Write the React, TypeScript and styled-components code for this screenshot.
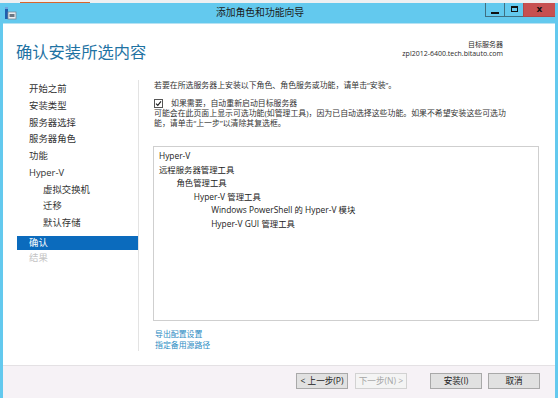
import styled, { createGlobalStyle } from "styled-components";

const GlobalStyle = createGlobalStyle`
  html, body {
    margin: 0;
    padding: 0;
    background: #ffffff;
  }
  body {
    width: 558px;
    height: 398px;
    overflow: hidden;
    font-family: "Open Sans", "Noto Sans CJK SC", sans-serif;
    color: #262626;
  }
`;

const Screen = styled.div`
  width: 558px;
  height: 398px;
  display: flex;
  flex-direction: column;
`;

const TopStrip = styled.div`
  height: 3px;
  background: #eef0f2;
  display: flex;
  align-items: flex-end;
`;

const OrangeMark = styled.div`
  margin-left: 20px;
  width: 70px;
  height: 1px;
  background: #d9652b;
`;

const Window = styled.div`
  flex: 1;
  display: flex;
  flex-direction: column;
  border-left: 3px solid #63c9ee;
  border-right: 3px solid #63c9ee;
  min-height: 0;
`;

const TitleBar = styled.div`
  height: 20px;
  background: #63c9ee;
  border-bottom: 1px solid #b6e2f3;
  display: flex;
  align-items: flex-start;
`;

const AppIcon = styled.svg`
  width: 13px;
  height: 14px;
  margin: 3px 0 0 1px;
  flex-shrink: 0;
`;

const Title = styled.div`
  flex: 1;
  text-align: center;
  font-size: 9.8px;
  line-height: 20px;
  color: #1b1b1b;
  padding-left: 18px;
`;

const Controls = styled.div`
  display: flex;
  height: 14px;
`;

const CtrlButton = styled.div<{ $close?: boolean }>`
  width: ${(p) => (p.$close ? "31px" : "18px")};
  height: 13px;
  display: flex;
  align-items: center;
  justify-content: center;
  background: ${(p) => (p.$close ? "#c75050" : "transparent")};
  border: 1px solid ${(p) => (p.$close ? "#b04848" : "#3f6f82")};
  border-top: none;
  border-right: ${(p) => (p.$close ? "none" : "0")};
`;

const MinGlyph = styled.div`
  width: 8px;
  height: 2px;
  background: #111;
  margin-top: 6px;
`;

const MaxGlyph = styled.div`
  width: 5px;
  height: 3px;
  border: 1px solid #111;
  border-top-width: 2px;
  margin-top: -1px;
`;

const CloseGlyph = styled.div`
  font-family: "DejaVu Sans", sans-serif;
  font-weight: 700;
  font-size: 9px;
  line-height: 9px;
  color: #111;
  margin-top: -1px;
`;

const Body = styled.div`
  flex: 1;
  display: flex;
  flex-direction: column;
  background: #ffffff;
  min-height: 0;
`;

const Header = styled.div`
  height: 56px;
  display: flex;
  justify-content: space-between;
  align-items: flex-start;
  padding: 0 52px 0 13px;
  box-sizing: border-box;
`;

const Heading = styled.h1`
  margin: 16px 0 0;
  font-size: 16.3px;
  font-weight: 400;
  line-height: 22px;
  color: #1f73a3;
  font-family: "Noto Sans CJK SC", sans-serif;
`;

const Target = styled.div`
  margin-top: 16px;
  text-align: right;
  font-size: 7px;
  line-height: 9px;
  color: #2a2a2a;
`;

const Main = styled.div`
  flex: 1;
  display: flex;
  padding: 0 16px 14px 14px;
  min-height: 0;
`;

const Sidebar = styled.nav`
  width: 121px;
  border-right: 1px solid #e3e3e3;
  display: flex;
  flex-direction: column;
  padding-top: 1px;
  flex-shrink: 0;
`;

const NavItem = styled.div<{ $sub?: boolean; $active?: boolean; $disabled?: boolean }>`
  height: ${(p) => (p.$active ? "14px" : "16.75px")};
  line-height: ${(p) => (p.$active ? "14px" : "16.75px")};
  margin-top: ${(p) => (p.$active ? "4px" : "0")};
  padding-left: ${(p) => (p.$sub ? "26px" : "12px")};
  font-size: 9.4px;
  background: ${(p) => (p.$active ? "#0b6bbd" : "transparent")};
  color: ${(p) => (p.$active ? "#ffffff" : p.$disabled ? "#c4c4c4" : "#333333")};
  white-space: nowrap;
`;

const Content = styled.section`
  flex: 1;
  display: flex;
  flex-direction: column;
  padding-left: 14px;
  min-width: 0;
`;

const Text = styled.p`
  margin: 0 0 0 1px;
  font-size: 7.9px;
  line-height: 10px;
  color: #333;
`;

const CheckRow = styled.label`
  display: flex;
  align-items: center;
  gap: 8px;
  margin: 8px 0 0 1px;
  font-size: 7.9px;
  line-height: 10px;
  color: #333;
`;

const CheckBox = styled.span`
  width: 7px;
  height: 7px;
  border: 1px solid #555;
  background: #fff;
  display: flex;
  align-items: center;
  justify-content: center;
`;

const Note = styled(Text)`
  margin-top: 1px;
  line-height: 9.5px;
  padding-right: 32px;
`;

const ListBox = styled.div`
  flex: 1;
  margin-top: 18px;
  border: 1px solid #cfcfcf;
  padding: 2px 5px;
`;

const ListRow = styled.div<{ $level: number }>`
  padding-left: ${(p) => p.$level * 17.4}px;
  font-size: 8.4px;
  line-height: 13.6px;
  color: #222;
  white-space: nowrap;
`;

const Links = styled.div`
  display: flex;
  flex-direction: column;
  margin: 8px 0 0 2px;
`;

const LinkText = styled.a`
  font-size: 7.9px;
  line-height: 11px;
  color: #2b8cc3;
  text-decoration: none;
`;

const Footer = styled.div`
  height: 33px;
  box-sizing: border-box;
  background: #f6f2f6;
  border-top: 1px solid #e4e1e4;
  display: flex;
  justify-content: flex-end;
  align-items: flex-start;
  padding: 7px 15px 0 0;
`;

const Button = styled.button<{ $gap?: number; $disabled?: boolean }>`
  width: 52px;
  height: 16px;
  margin-left: ${(p) => p.$gap ?? 6}px;
  padding: 0;
  font-family: "Open Sans", "Noto Sans CJK SC", sans-serif;
  font-size: 8.6px;
  line-height: 14px;
  background: ${(p) => (p.$disabled ? "#f4f4f4" : "#e1e1e1")};
  border: 1px solid ${(p) => (p.$disabled ? "#d2d2d2" : "#a9a9a9")};
  color: ${(p) => (p.$disabled ? "#a6a6a6" : "#222")};
`;

const nav = [
  { label: "开始之前" },
  { label: "安装类型" },
  { label: "服务器选择" },
  { label: "服务器角色" },
  { label: "功能" },
  { label: "Hyper-V" },
  { label: "虚拟交换机", sub: true },
  { label: "迁移", sub: true },
  { label: "默认存储", sub: true },
  { label: "确认", active: true },
  { label: "结果", disabled: true },
];

const features = [
  { label: "Hyper-V", level: 0 },
  { label: "远程服务器管理工具", level: 0 },
  { label: "角色管理工具", level: 1 },
  { label: "Hyper-V 管理工具", level: 2 },
  { label: "Windows PowerShell 的 Hyper-V 模块", level: 3 },
  { label: "Hyper-V GUI 管理工具", level: 3 },
];

export default function App() {
  return (
    <Screen>
      <GlobalStyle />
      <TopStrip>
        <OrangeMark />
      </TopStrip>
      <Window>
        <TitleBar>
          <AppIcon viewBox="0 0 13 14">
            <rect x="1" y="1" width="3" height="12" fill="#1f5fae" />
            <rect x="1" y="1" width="3" height="2" fill="#6fa3dc" />
            <rect x="4" y="6" width="8" height="7" fill="#e9eef3" stroke="#7b8794" strokeWidth="0.8" />
            <rect x="5.5" y="8" width="5" height="3" fill="#6b7682" />
          </AppIcon>
          <Title>添加角色和功能向导</Title>
          <Controls>
            <CtrlButton>
              <MinGlyph />
            </CtrlButton>
            <CtrlButton>
              <MaxGlyph />
            </CtrlButton>
            <CtrlButton $close>
              <CloseGlyph>x</CloseGlyph>
            </CtrlButton>
          </Controls>
        </TitleBar>
        <Body>
          <Header>
            <Heading>确认安装所选内容</Heading>
            <Target>
              <div>目标服务器</div>
              <div>zpl2012-6400.tech.bitauto.com</div>
            </Target>
          </Header>
          <Main>
            <Sidebar>
              {nav.map((n) => (
                <NavItem key={n.label} $sub={n.sub} $active={n.active} $disabled={n.disabled}>
                  {n.label}
                </NavItem>
              ))}
            </Sidebar>
            <Content>
              <Text>若要在所选服务器上安装以下角色、角色服务或功能，请单击“安装”。</Text>
              <CheckRow>
                <CheckBox>
                  <svg width="7" height="7" viewBox="0 0 7 7">
                    <path d="M1 3.6 L2.8 5.4 L6 1.4" fill="none" stroke="#222" strokeWidth="1.2" />
                  </svg>
                </CheckBox>
                如果需要，自动重新启动目标服务器
              </CheckRow>
              <Note>
                可能会在此页面上显示可选功能(如管理工具)，因为已自动选择这些功能。如果不希望安装这些可选功能，请单击“上一步”以清除其复选框。
              </Note>
              <ListBox>
                {features.map((f) => (
                  <ListRow key={f.label} $level={f.level}>
                    {f.label}
                  </ListRow>
                ))}
              </ListBox>
              <Links>
                <LinkText href="#">导出配置设置</LinkText>
                <LinkText href="#">指定备用源路径</LinkText>
              </Links>
            </Content>
          </Main>
          <Footer>
            <Button>&lt; 上一步(P)</Button>
            <Button $gap={7} $disabled>
              下一步(N) &gt;
            </Button>
            <Button $gap={23}>安装(I)</Button>
            <Button>取消</Button>
          </Footer>
        </Body>
      </Window>
    </Screen>
  );
}
